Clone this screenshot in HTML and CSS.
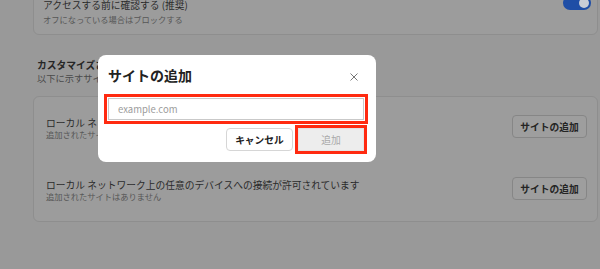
FILE: index.html
```html
<!DOCTYPE html>
<html lang="ja">
<head>
<meta charset="utf-8">
<title>サイトの追加</title>
<link rel="stylesheet" href="styles.css">
</head>
<body>
<div class="page">
  <div class="card top-card">
    <div class="row-top">
      <div class="texts">
        <div class="label">アクセスする前に確認する (推奨)</div>
        <div class="sub">オフになっている場合はブロックする</div>
      </div>
      <div class="toggle"><span class="knob"></span></div>
    </div>
  </div>

  <div class="section-head">
    <div class="heading">カスタマイズされた動作</div>
    <div class="subtitle">以下に示すサイトは、デフォルト以外のカスタム設定に従います</div>
  </div>

  <div class="card list-card">
    <div class="row">
      <div class="texts">
        <div class="label">ローカル ネットワーク上の任意のデバイスへの接続が許可されていません</div>
        <div class="sub">追加されたサイトはありません</div>
      </div>
      <button class="btn-add-site">サイトの追加</button>
    </div>
    <div class="row">
      <div class="texts">
        <div class="label">ローカル ネットワーク上の任意のデバイスへの接続が許可されています</div>
        <div class="sub">追加されたサイトはありません</div>
      </div>
      <button class="btn-add-site">サイトの追加</button>
    </div>
  </div>
</div>

<div class="dialog">
  <div class="dialog-head">
    <div class="dialog-title">サイトの追加</div>
    <svg class="close" width="10" height="10" viewBox="0 0 10 10"><path d="M1.5 1.5L8.5 8.5M8.5 1.5L1.5 8.5" stroke="#777777" stroke-width="1" fill="none"/></svg>
  </div>
  <input class="site-input annot" type="text" placeholder="example.com">
  <div class="actions">
    <button class="btn-cancel">キャンセル</button>
    <button class="btn-add annot">追加</button>
  </div>
</div>
</body>
</html>
```

FILE: styles.css
```css
* { box-sizing: border-box; }
html, body {
  margin: 0;
  padding: 0;
}
body {
  width: 600px;
  height: 269px;
  overflow: hidden;
  background: #999999;
  font-family: "Noto Sans CJK JP", "Noto Sans", sans-serif;
  color: #2a2a2a;
  position: relative;
}
.page {
  margin-top: -15px;
  padding: 0 2px 0 33px;
}
.card {
  background: #9c9c9c;
  border: 1px solid #8e8e8e;
  border-radius: 6px;
}
.top-card {
  padding: 12px 6px 9px 9px;
}
.row-top {
  display: flex;
  justify-content: space-between;
  align-items: flex-start;
}
.label {
  font-size: 9.75px;
  line-height: 12px;
  color: #2b2b2b;
  white-space: nowrap;
}
.top-card .label { line-height: 14px; }
.sub {
  font-size: 8.25px;
  line-height: 11px;
  color: #565656;
  white-space: nowrap;
}
.top-card .sub { margin-top: 1px; line-height: 12px; }
.toggle {
  width: 28px;
  height: 14px;
  margin-top: -2px;
  border-radius: 7px;
  background: #1f4ea6;
  display: flex;
  align-items: center;
  justify-content: flex-end;
  padding-right: 2px;
}
.knob {
  width: 10px;
  height: 10px;
  border-radius: 50%;
  background: #c9cdd6;
}
.section-head {
  margin-top: 24px;
  padding-left: 4px;
}
.heading {
  font-size: 9.75px;
  line-height: 13px;
  font-weight: 700;
  color: #262626;
}
.subtitle {
  font-size: 9.25px;
  line-height: 12px;
  color: #4a4a4a;
  white-space: nowrap;
}
.list-card {
  margin-top: 12px;
}
.row {
  height: 62px;
  display: flex;
  align-items: center;
  justify-content: space-between;
  padding: 0 10px 0 12px;
}
.btn-add-site {
  width: 75px;
  height: 23px;
  margin-bottom: 3px;
  border: 1px solid #868686;
  border-radius: 4px;
  background: #9e9e9e;
  font-family: inherit;
  font-size: 9.75px;
  font-weight: 700;
  color: #242424;
  padding: 0;
}
.dialog {
  position: absolute;
  left: 98px;
  top: 55px;
  width: 278px;
  background: #ffffff;
  border-radius: 8px;
  padding: 11px 12px 11px 10px;
}
.dialog-head {
  display: flex;
  justify-content: space-between;
  align-items: center;
}
.dialog-title {
  font-size: 14px;
  line-height: 18px;
  font-weight: 700;
  color: #222222;
}
.close {
  margin-right: 5px;
  margin-top: 4px;
}
.site-input {
  display: block;
  width: 100%;
  height: 22px;
  margin-top: 14px;
  border: 1px solid #c9c9c9;
  border-radius: 0;
  padding: 0 0 0 9px;
  font-family: inherit;
  font-size: 9.5px;
  color: #333;
  background: #fff;
}
.site-input::placeholder { color: #9c9c9c; }
.annot {
  outline: 3px solid #ff2a10;
  outline-offset: 1px;
}
.actions {
  display: flex;
  justify-content: flex-end;
  gap: 5px;
  margin-top: 8px;
}
.btn-cancel, .btn-add {
  height: 23px;
  font-family: inherit;
  font-size: 9.75px;
  padding: 0;
}
.btn-cancel {
  width: 67px;
  border-radius: 4px;
  background: #ffffff;
  border: 1px solid #d6d6d6;
  font-weight: 700;
  color: #222222;
}
.btn-add {
  width: 66px;
  border-radius: 0;
  background: #ededed;
  border: 1px solid #e4e4e4;
  color: #a9a9a9;
  outline-offset: 0;
}
```
